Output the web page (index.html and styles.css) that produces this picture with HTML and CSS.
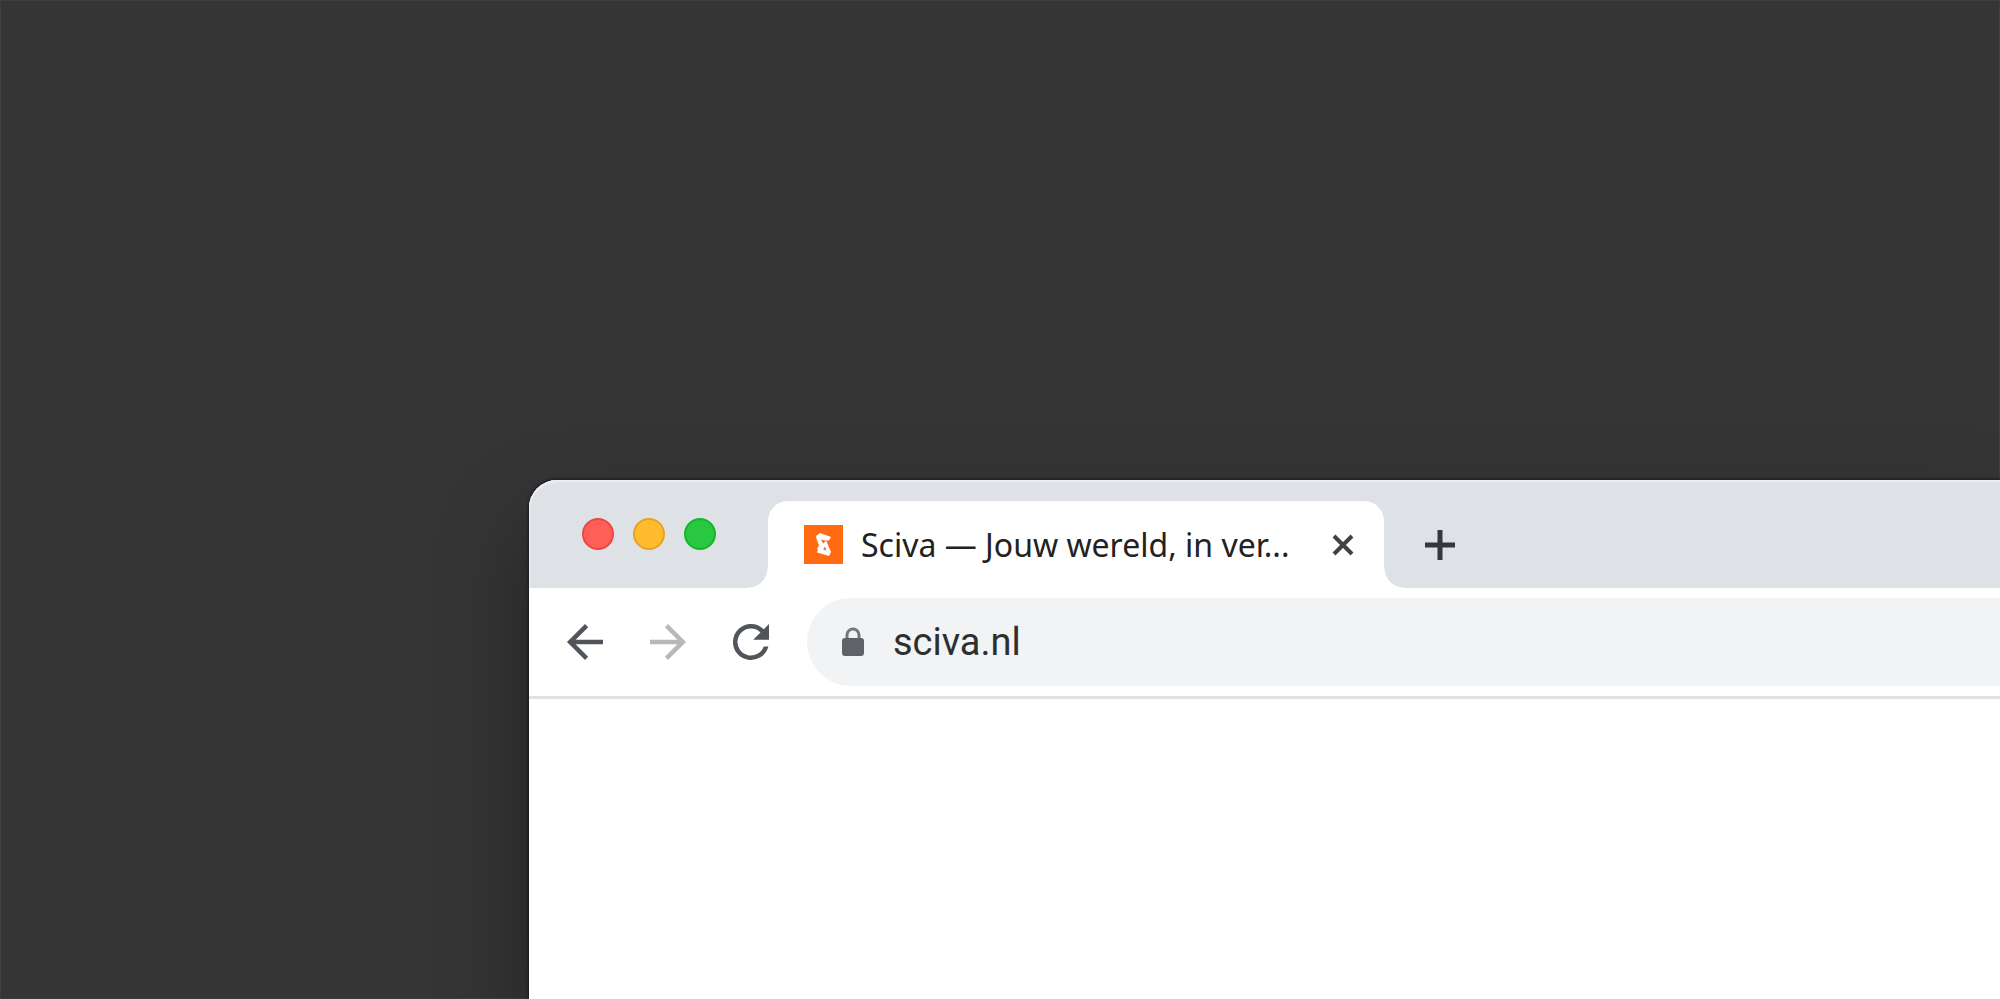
FILE: index.html
```html
<!DOCTYPE html>
<html lang="nl">
<head>
<meta charset="utf-8">
<title>Sciva</title>
<link rel="stylesheet" href="styles.css">
</head>
<body>
<main class="browser">
  <header class="tabstrip">
    <div class="lights">
      <button class="light red" aria-label="Sluiten"></button>
      <button class="light yellow" aria-label="Minimaliseren"></button>
      <button class="light green" aria-label="Vergroten"></button>
    </div>
    <div class="tab">
      <svg class="favicon" viewBox="0 0 39 39" aria-hidden="true">
        <path fill="#ff6a13" d="M0 0h39v39H0z"/>
        <path fill="#fff" fill-rule="evenodd" d="M12 11l4-3 11 4-2 3.500h-3l2 4.500 3 7-2 4-12-3.500 1-3-1-1 2-3-2-5zM17 14.500l5 1.200-2.800 2.800zM19 24.500l2-3 1.500 4z"/>
      </svg>
      <span class="title">Sciva — Jouw wereld, in ver...</span>
      <button class="close" aria-label="Tabblad sluiten">
        <svg viewBox="0 0 24 24"><path d="M3 3l18 18M21 3L3 21" stroke="#3f4347" stroke-width="4"/></svg>
      </button>
    </div>
    <button class="new-tab" aria-label="Nieuw tabblad">
      <svg viewBox="0 0 32 32"><path d="M16 1v30M1 16h30" stroke="#33383c" stroke-width="5"/></svg>
    </button>
  </header>
  <nav class="toolbar">
    <button class="nav" aria-label="Terug">
      <svg viewBox="0 0 24 24"><path fill="#50555b" d="M20 11H7.830l5.590-5.590L12 4l-8 8 8 8 1.410-1.410L7.830 13H20z"/></svg>
    </button>
    <button class="nav" aria-label="Vooruit" disabled>
      <svg viewBox="0 0 24 24"><path fill="#b7b8ba" d="M12 4l-1.410 1.410L16.170 11H4v2h12.170l-5.580 5.590L12 20l8-8z"/></svg>
    </button>
    <button class="nav" aria-label="Vernieuwen">
      <svg viewBox="0 0 24 24"><path fill="#50555b" d="M17.650 6.350A7.960 7.960 0 0 0 12 4a8 8 0 1 0 7.730 10h-2.080A6 6 0 1 1 12 6c1.660 0 3.140.690 4.220 1.780L13 11h7V4z"/></svg>
    </button>
    <label class="omnibox">
      <svg class="lock" viewBox="0 0 22 30" aria-hidden="true">
        <path d="M5 13V8a6 6 0 0 1 12 0v5" fill="none" stroke="#74787d" stroke-width="3"/>
        <rect y="11" width="22" height="18" rx="3" fill="#5f6368"/>
      </svg>
      <input class="url" type="text" value="sciva.nl" aria-label="Adres">
    </label>
  </nav>
</main>
</body>
</html>
```
FILE: styles.css
```css
* {
  box-sizing: border-box;
}

body {
  margin: 0;
  min-height: 100vh;
  display: flex;
  padding: 480px 0 0 529px;
  background: #353535;
  box-shadow: inset 0 0 0 1px #3f3f3f;
  overflow: hidden;
}

button {
  padding: 0;
  border: 0;
  background: none;
}

svg {
  display: block;
  width: 100%;
  height: 100%;
}

.browser {
  flex: 1;
  min-width: 0;
  background: #fff;
  border-top-left-radius: 28px;
  box-shadow: 0 0 3px 1px #1a1a1a, 0 44px 90px rgba(0, 0, 0, .36);
}

.tabstrip {
  display: flex;
  align-items: flex-end;
  height: 108px;
  background: #dee1e6;
  border-top-left-radius: 28px;
  box-shadow: inset 1px 2px 1px #eceef3;
}

.lights {
  display: flex;
  gap: 19px;
  padding: 0 52px 38px 53px;
}

.light {
  width: 32px;
  height: 32px;
  border: 2px solid;
  border-radius: 50%;
}

.red {
  background: #ff5f57;
  border-color: #ee453f;
}

.yellow {
  background: #febc2e;
  border-color: #e9a21a;
}

.green {
  background: #28c840;
  border-color: #16b52a;
}

.tab {
  position: relative;
  display: flex;
  align-items: center;
  width: 616px;
  height: 87px;
  padding: 0 29px 0 36px;
  background: #fff;
  border-radius: 20px 20px 0 0;
}

.tab::before,
.tab::after {
  content: "";
  position: absolute;
  bottom: 0;
  width: 20px;
  height: 20px;
}

.tab::before {
  right: 100%;
  background: radial-gradient(circle at 0 0, #dee1e6 19px, #fff 20px);
}

.tab::after {
  left: 100%;
  background: radial-gradient(circle at 100% 0, #dee1e6 19px, #fff 20px);
}

.favicon {
  flex: none;
  width: 39px;
  height: 39px;
  margin-right: 18px;
}

.title {
  flex: 1;
  font: 32px/40px "Noto Sans", sans-serif;
  color: #222;
  white-space: nowrap;
}

.close {
  width: 24px;
  height: 24px;
}

.new-tab {
  width: 32px;
  height: 32px;
  margin: 0 0 27px 40px;
}

.toolbar {
  display: flex;
  align-items: center;
  gap: 29px;
  height: 111px;
  padding-left: 29px;
  border-bottom: 3px solid #e1e2e3;
}

.nav {
  width: 54px;
  height: 54px;
}

.omnibox {
  flex: 1;
  display: flex;
  align-items: center;
  gap: 29px;
  height: 88px;
  padding-left: 35px;
  background: #f1f3f4;
  border-radius: 44px 0 0 44px;
}

.lock {
  width: 22px;
  height: 30px;
}

.url {
  flex: 1;
  min-width: 0;
  padding: 0;
  border: 0;
  background: none;
  outline: 0;
  font: 38px/44px Roboto, sans-serif;
  color: #2c2e32;
}
```
